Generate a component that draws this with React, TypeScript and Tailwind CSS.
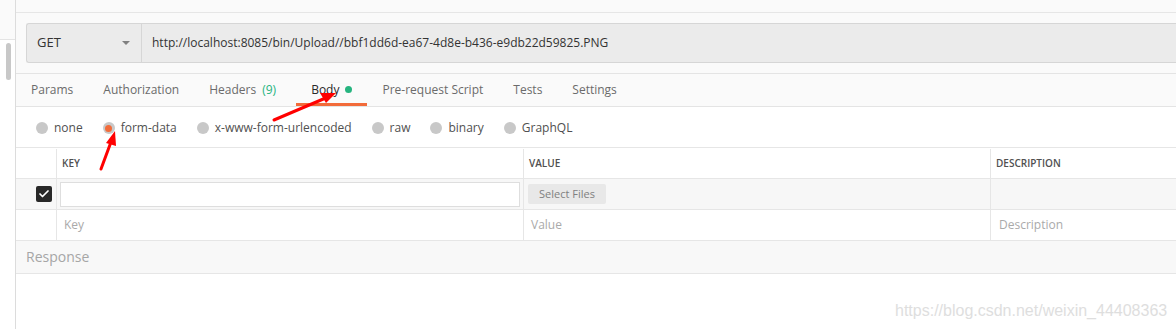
import { Check } from "lucide-react";

const tabs = [
  { label: "Params" },
  { label: "Authorization" },
  { label: "Headers", count: "(9)" },
  { label: "Body", active: true, dot: true },
  { label: "Pre-request Script" },
  { label: "Tests" },
  { label: "Settings" },
];

const bodyTypes = [
  { label: "none" },
  { label: "form-data", selected: true },
  { label: "x-www-form-urlencoded" },
  { label: "raw" },
  { label: "binary" },
  { label: "GraphQL" },
];

function Radio({ selected }: { selected?: boolean }) {
  return (
    <span className="flex h-[12px] w-[12px] items-center justify-center rounded-full bg-[#c8c8c8]">
      {selected && <span className="h-[7px] w-[7px] rounded-full bg-[#f26b3a]" />}
    </span>
  );
}

export default function App() {
  return (
    <div className="relative flex h-[329px] w-[1176px] overflow-hidden bg-white font-['Open_Sans',sans-serif] text-[12px] text-[#505050]">
      {/* Sidebar edge */}
      <div className="flex w-[16px] shrink-0 flex-col border-r border-[#dcdcdc]">
        <div className="h-[40px] border-b border-[#e4e4e4] bg-[#fafafa]" />
        <div className="flex flex-1 pl-[6px] pt-[3px]">
          <div className="h-[37px] w-[5px] rounded-full bg-[#c8c8c8]" />
        </div>
      </div>

      <div className="flex min-w-0 flex-1 flex-col">
        {/* Request url */}
        <div className="h-[13px] border-b border-[#e6e6e6] bg-[#fafafa]" />
        <div className="bg-[#fafafa] py-[10px] pl-[10px]">
          <div className="flex h-[40px] rounded-l-[3px] border border-r-0 border-[#d6d6d6] bg-[#ebebeb]">
            <div className="flex w-[115px] items-center justify-between border-r border-[#d6d6d6] pl-[10px] pr-[11px] text-[13px] text-[#333]">
              <span>GET</span>
              <span className="h-0 w-0 border-x-[4px] border-t-[4px] border-x-transparent border-t-[#808080]" />
            </div>
            <div className="flex items-center pl-[10px] text-[12px] text-[#333]">
              http://localhost:8085/bin/Upload//bbf1dd6d-ea67-4d8e-b436-e9db22d59825.PNG
            </div>
          </div>
        </div>

        {/* Tabs */}
        <div className="flex h-[34px] border-y border-[#e4e4e4] bg-[#fafafa]">
          {tabs.map((tab) => (
            <div
              key={tab.label}
              className={
                tab.active
                  ? "ml-[5px] flex items-center gap-[6px] border-b-[3px] border-[#f26b3a] px-[15px] pt-[3px] text-[#282828]"
                  : "flex items-center gap-[6px] px-[15px] text-[#6b6b6b]"
              }
            >
              <span>{tab.label}</span>
              {tab.count && <span className="text-[#26b47f]">{tab.count}</span>}
              {tab.dot && <span className="-mt-[2px] h-[7px] w-[7px] rounded-full bg-[#26b47f]" />}
            </div>
          ))}
        </div>

        {/* Body types */}
        <div className="flex h-[41px] items-center gap-[20px] border-b border-[#e6e6e6] pl-[20px] pt-[2px]">
          {bodyTypes.map((t) => (
            <div key={t.label} className="flex items-center gap-[6px] text-[#505050]">
              <Radio selected={t.selected} />
              <span>{t.label}</span>
            </div>
          ))}
        </div>

        {/* Params table */}
        <div className="flex h-[31px] border-b border-[#e6e6e6] pt-[1px] text-[10px] font-semibold text-[#505050]">
          <div className="w-[41px] shrink-0 border-r border-[#e6e6e6]" />
          <div className="flex w-[467px] shrink-0 items-center border-r border-[#e6e6e6] pl-[5px]">KEY</div>
          <div className="flex w-[467px] shrink-0 items-center border-r border-[#e6e6e6] pl-[5px]">VALUE</div>
          <div className="flex flex-1 items-center pl-[5px]">DESCRIPTION</div>
        </div>
        <div className="flex h-[31px] border-b border-[#e6e6e6] bg-[#f7f7f7]">
          <div className="flex w-[41px] shrink-0 items-center border-r border-[#e6e6e6] pl-[20px]">
            <span className="flex h-[16px] w-[16px] items-center justify-center rounded-[2px] bg-[#282828]">
              <Check size={12} strokeWidth={3.5} className="text-white" />
            </span>
          </div>
          <div className="flex w-[467px] shrink-0 items-center border-r border-[#e6e6e6] pl-[3px] pr-[3px]">
            <div className="h-[25px] w-full border border-[#dedede] bg-white" />
          </div>
          <div className="flex w-[467px] shrink-0 items-center border-r border-[#e6e6e6] pl-[4px]">
            <span className="flex h-[20px] w-[78px] items-center justify-center rounded-[2px] bg-[#e8e8e8] text-[11px] text-[#808080]">
              Select Files
            </span>
          </div>
          <div className="flex-1" />
        </div>
        <div className="flex h-[31px] border-b border-[#e6e6e6] text-[#aaaaaa]">
          <div className="w-[41px] shrink-0 border-r border-[#e6e6e6]" />
          <div className="flex w-[467px] shrink-0 items-center border-r border-[#e6e6e6] pl-[7px]">Key</div>
          <div className="flex w-[467px] shrink-0 items-center border-r border-[#e6e6e6] pl-[7px]">Value</div>
          <div className="flex flex-1 items-center pl-[8px]">Description</div>
        </div>

        {/* Response */}
        <div className="flex h-[33px] items-center border-b border-[#e6e6e6] bg-[#f8f8f8] pb-[1px] pl-[10px] text-[14px] text-[#a6a6a6]">
          Response
        </div>
        <div className="flex-1" />
      </div>

      {/* Annotations */}
      <svg className="pointer-events-none absolute left-0 top-0" width="1176" height="329">
        <line x1="274" y1="120" x2="328" y2="97" stroke="#ff0000" strokeWidth="3" strokeLinecap="round" />
        <polygon points="336,93 320,93 326,103" fill="#ff0000" />
        <line x1="101" y1="169" x2="111" y2="142" stroke="#ff0000" strokeWidth="3" strokeLinecap="round" />
        <polygon points="115,131 106,143 116,146" fill="#ff0000" />
      </svg>
      <div className="pointer-events-none absolute left-[895px] top-[299px] font-['Liberation_Sans',Arial,sans-serif] text-[16px] text-[#dedede]">
        https://blog.csdn.net/weixin_44408363
      </div>
    </div>
  );
}
